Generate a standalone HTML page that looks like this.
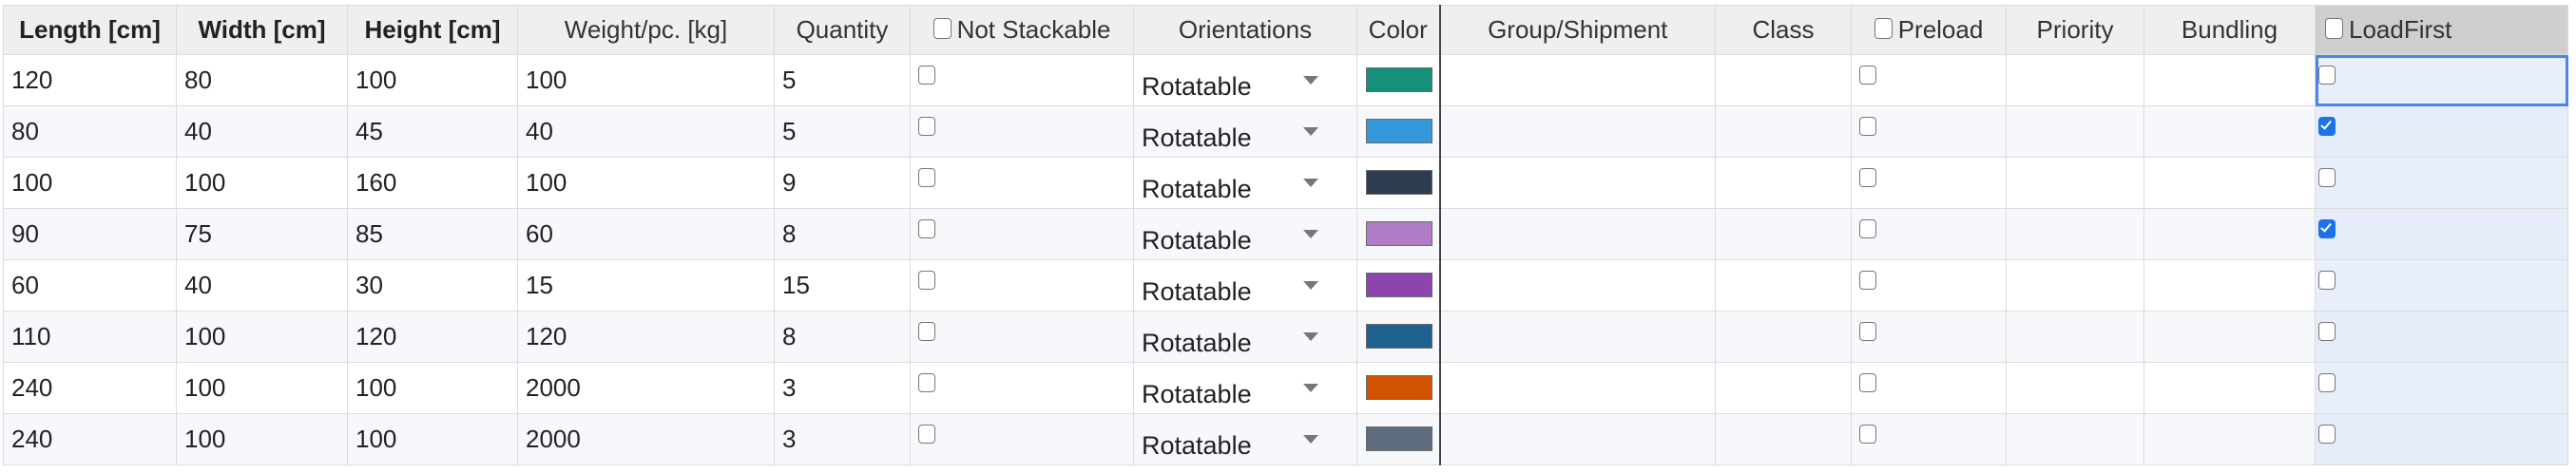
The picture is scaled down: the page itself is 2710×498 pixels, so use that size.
<!DOCTYPE html>
<html><head><meta charset="utf-8"><style>
html,body{margin:0;padding:0;width:2710px;height:498px;background:#fff;overflow:hidden}
table{position:absolute;left:3px;top:5px;border-collapse:collapse;table-layout:fixed;font-family:"Liberation Sans",Arial,sans-serif;font-size:26px;color:#222}
td,th{border:1px solid #dcdcdc;padding:0 0 0 8px;white-space:nowrap;overflow:hidden;position:relative}
th{height:51px;background:#efefef;font-weight:normal;text-align:center;padding:0;color:#333}
th.b{font-weight:bold;color:#222}
th.lf{background:#cfcfcf;text-align:left;padding-left:10px}
td{height:53px;vertical-align:middle}
tr.e td{background:#f6f8fc}
td.lf{background:#e9eefb}
tr.e td.lf{background:#e6ecfa}
.cb{display:inline-block;width:18px;height:20px;border:1.5px solid #777;border-radius:4px;background:#fff;box-sizing:border-box;vertical-align:middle;position:relative}
th .cb{width:19px;height:22px;margin-right:6px;top:-3px}
td .cb{position:absolute;left:8px;top:11px}
.ck{background:#1a73e8;border-color:#1a73e8}
.ck::after{content:"";position:absolute;left:4px;top:1px;width:4px;height:9px;border:solid #fff;border-width:0 2.5px 2.5px 0;transform:rotate(40deg)}
.rot{position:absolute;left:8px;top:18px;font-size:27px}
.arr{position:absolute;right:40px;top:22px;width:0;height:0;border-left:8px solid transparent;border-right:8px solid transparent;border-top:9px solid #777}
.sw{position:absolute;left:9px;top:13px;width:70px;height:26px;border:1px solid #6a6a6a;box-sizing:border-box}
.dbl{border-right:2px solid #444}
.sel{outline:3px solid #4a86e8;outline-offset:-3px}
</style></head><body>
<table>
<colgroup><col style="width:182px"><col style="width:180px"><col style="width:179px"><col style="width:270px"><col style="width:143px"><col style="width:235px"><col style="width:235px"><col style="width:87px"><col style="width:290px"><col style="width:143px"><col style="width:163px"><col style="width:145px"><col style="width:180px"><col style="width:266px"></colgroup>
<tr><th class="b">Length [cm]</th><th class="b">Width [cm]</th><th class="b">Height [cm]</th><th>Weight/pc. [kg]</th><th>Quantity</th><th><span class="cb"></span>Not Stackable</th><th>Orientations</th><th class="dbl">Color</th><th>Group/Shipment</th><th>Class</th><th><span class="cb"></span>Preload</th><th>Priority</th><th>Bundling</th><th class="lf"><span class="cb"></span>LoadFirst</th></tr>
<tr><td>120</td><td>80</td><td>100</td><td>100</td><td>5</td><td><span class="cb"></span></td><td><span class="rot">Rotatable</span><span class="arr"></span></td><td class="dbl"><span class="sw" style="background:#16907a"></span></td><td></td><td></td><td><span class="cb"></span></td><td></td><td></td><td class="lf sel"><span class="cb" style="left:3px"></span></td></tr>
<tr class="e"><td>80</td><td>40</td><td>45</td><td>40</td><td>5</td><td><span class="cb"></span></td><td><span class="rot">Rotatable</span><span class="arr"></span></td><td class="dbl"><span class="sw" style="background:#3498db"></span></td><td></td><td></td><td><span class="cb"></span></td><td></td><td></td><td class="lf"><span class="cb ck" style="left:3px"></span></td></tr>
<tr><td>100</td><td>100</td><td>160</td><td>100</td><td>9</td><td><span class="cb"></span></td><td><span class="rot">Rotatable</span><span class="arr"></span></td><td class="dbl"><span class="sw" style="background:#2c3e50"></span></td><td></td><td></td><td><span class="cb"></span></td><td></td><td></td><td class="lf"><span class="cb" style="left:3px"></span></td></tr>
<tr class="e"><td>90</td><td>75</td><td>85</td><td>60</td><td>8</td><td><span class="cb"></span></td><td><span class="rot">Rotatable</span><span class="arr"></span></td><td class="dbl"><span class="sw" style="background:#b07cc6"></span></td><td></td><td></td><td><span class="cb"></span></td><td></td><td></td><td class="lf"><span class="cb ck" style="left:3px"></span></td></tr>
<tr><td>60</td><td>40</td><td>30</td><td>15</td><td>15</td><td><span class="cb"></span></td><td><span class="rot">Rotatable</span><span class="arr"></span></td><td class="dbl"><span class="sw" style="background:#8e44ad"></span></td><td></td><td></td><td><span class="cb"></span></td><td></td><td></td><td class="lf"><span class="cb" style="left:3px"></span></td></tr>
<tr class="e"><td>110</td><td>100</td><td>120</td><td>120</td><td>8</td><td><span class="cb"></span></td><td><span class="rot">Rotatable</span><span class="arr"></span></td><td class="dbl"><span class="sw" style="background:#1f618d"></span></td><td></td><td></td><td><span class="cb"></span></td><td></td><td></td><td class="lf"><span class="cb" style="left:3px"></span></td></tr>
<tr><td>240</td><td>100</td><td>100</td><td>2000</td><td>3</td><td><span class="cb"></span></td><td><span class="rot">Rotatable</span><span class="arr"></span></td><td class="dbl"><span class="sw" style="background:#d35400"></span></td><td></td><td></td><td><span class="cb"></span></td><td></td><td></td><td class="lf"><span class="cb" style="left:3px"></span></td></tr>
<tr class="e"><td>240</td><td>100</td><td>100</td><td>2000</td><td>3</td><td><span class="cb"></span></td><td><span class="rot">Rotatable</span><span class="arr"></span></td><td class="dbl"><span class="sw" style="background:#5d6d7e"></span></td><td></td><td></td><td><span class="cb"></span></td><td></td><td></td><td class="lf"><span class="cb" style="left:3px"></span></td></tr>
</table>
</body></html>
